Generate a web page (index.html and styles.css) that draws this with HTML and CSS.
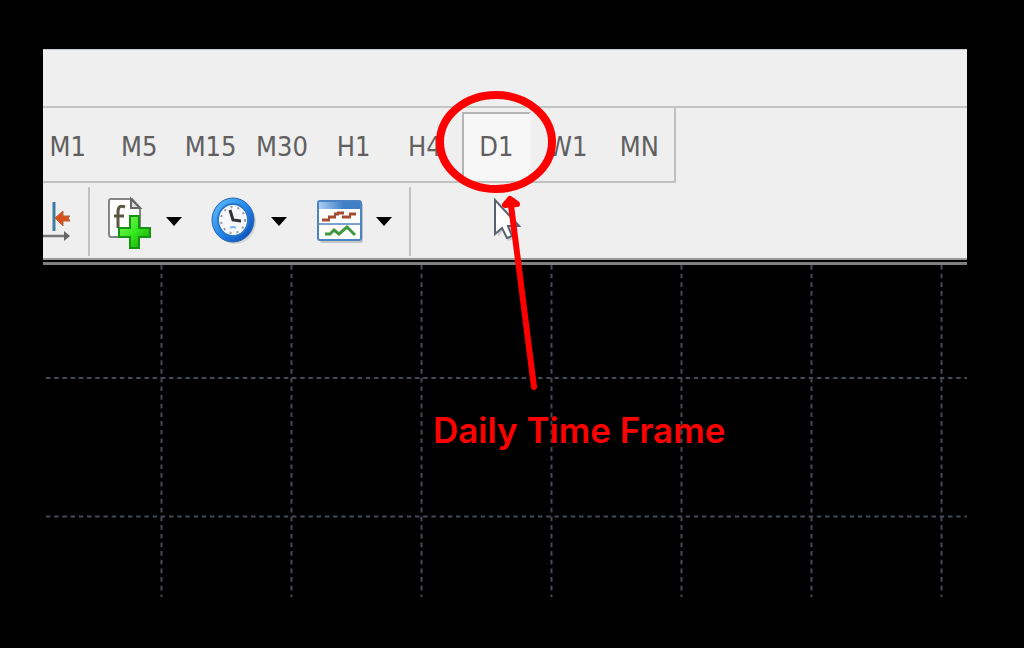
FILE: index.html
```html
<!DOCTYPE html>
<html lang="en">
<head>
<meta charset="utf-8">
<title>Daily Time Frame</title>
<link rel="stylesheet" href="styles.css">
</head>
<body>
<main class="terminal">
  <header class="toolbars">
    <div class="menu-strip"></div>
    <nav class="timeframes" aria-label="Time frames">
      <button class="tf" type="button">M1</button>
      <button class="tf" type="button">M5</button>
      <button class="tf" type="button">M15</button>
      <button class="tf" type="button">M30</button>
      <button class="tf" type="button">H1</button>
      <button class="tf" type="button">H4</button>
      <button class="tf tf-active" type="button" aria-pressed="true">D1</button>
      <button class="tf" type="button">W1</button>
      <button class="tf" type="button">MN</button>
    </nav>
    <div class="tools">
      <button class="tool shift" type="button" aria-label="Chart shift">
        <svg width="32" height="48" viewBox="0 0 32 48">
          <path d="M0 39H24" stroke="#777" stroke-width="2.5"/>
          <path d="M21 34l6 5-6 5z" fill="#666"/>
          <path d="M11 5V34" stroke="#3f7da0" stroke-width="3"/>
          <path d="M12 21l8-7v5h7l-2 2 2 3h-7v5z" fill="#d9501a" stroke="#b5603c" stroke-width="1"/>
        </svg>
      </button>
      <span class="divider"></span>
      <div class="group">
        <button class="tool" type="button" aria-label="Indicators">
          <svg width="48" height="58" viewBox="0 -3 48 58">
            <defs><linearGradient id="plus" x1="0" y1="0" x2="1" y2="1"><stop offset="0" stop-color="#8df56c"/><stop offset=".5" stop-color="#35e81c"/><stop offset="1" stop-color="#159a0b"/></linearGradient></defs>
            <path d="M5 4H26L34 13V42H5Q3 42 3 39V6Q3 4 5 4z" fill="#fff" stroke="#858585" stroke-width="2"/>
            <path d="M25 4V13H34z" fill="#ddd" stroke="#666" stroke-width="2"/>
            <path d="M19 12Q12 9 12 17V33M8 21H18" fill="none" stroke="#5b5747" stroke-width="3"/>
            <path d="M24 21H33V33H44V42H33V53H24V42H13V33H24z" fill="url(#plus)" stroke="#159312" stroke-width="2"/>
          </svg>
          <svg width="16" height="10" viewBox="0 0 16 10"><path d="M0 1H16L8 10z" fill="#000"/></svg>
        </button>
        <button class="tool" type="button" aria-label="Periods">
          <svg width="48" height="52" viewBox="0 0 48 52">
            <defs><linearGradient id="rim" x1="0" y1="0" x2="1" y2="1"><stop offset="0" stop-color="#65c3ff"/><stop offset=".5" stop-color="#2388ec"/><stop offset="1" stop-color="#073fae"/></linearGradient></defs>
            <ellipse cx="24" cy="27" rx="21" ry="22" fill="#bbb" opacity=".5"/>
            <ellipse cx="22" cy="25" rx="21" ry="22" fill="url(#rim)" stroke="#2865aa"/>
            <ellipse cx="22" cy="25" rx="15" ry="16" fill="#f5f7fa" stroke="#2c78c8" stroke-width="2"/>
            <ellipse cx="22" cy="25" rx="12" ry="13" fill="none" stroke="#999" stroke-width="2" stroke-dasharray="2 5"/>
            <path d="M19 15l3 10 8 1" fill="none" stroke="#333" stroke-width="3"/>
            <path d="M19 33q3-2 6 0" fill="none" stroke="#79b6f3" stroke-width="2"/>
          </svg>
          <svg width="16" height="10" viewBox="0 0 16 10"><path d="M0 1H16L8 10z" fill="#000"/></svg>
        </button>
        <button class="tool" type="button" aria-label="Templates">
          <svg width="48" height="52" viewBox="0 0 48 52">
            <defs><linearGradient id="bar"><stop offset="0" stop-color="#a8cdf2"/><stop offset=".6" stop-color="#3e7fc5"/></linearGradient></defs>
            <rect x="4" y="8" width="43" height="40" rx="2" fill="#c4c4c4"/>
            <rect x="2" y="6" width="43" height="39" rx="2" fill="#fff" stroke="#4a84c4" stroke-width="2"/>
            <path d="M3 7H44V14H3z" fill="url(#bar)"/>
            <path d="M3 29H44" stroke="#7aa3d0" stroke-width="2"/>
            <path d="M6 25H14M12 22H20M18 19H23M21 18H28M26 22H35M33 19H40" fill="none" stroke="#a54b31" stroke-width="3"/>
            <path d="M9 39H14L18 35L23 39L31 32L39 40" fill="none" stroke="#3f983e" stroke-width="3"/>
          </svg>
          <svg width="16" height="10" viewBox="0 0 16 10"><path d="M0 1H16L8 10z" fill="#000"/></svg>
        </button>
      </div>
      <span class="divider"></span>
    </div>
  </header>
  <section class="chart">
    <svg class="grid" width="100%" height="332">
      <g stroke="#434b56" stroke-width="2">
        <g stroke-dasharray="4.7 3.97">
          <path d="M118.500 0V332M248.500 0V332M378.500 0V332M508.500 0V332M638.500 0V332M768.500 0V332M898.500 0V332"/>
        </g>
        <g stroke-dasharray="4.5 3.7">
          <line x1="3" y1="113" x2="100%" y2="113"/>
          <line x1="3" y1="251.500" x2="100%" y2="251.500"/>
        </g>
      </g>
    </svg>
  </section>
  <svg class="markup" width="130" height="350" viewBox="430 50 130 350">
    <path d="M498 204L521 226 511 227 516 238 508 241 503 230 498 237z" fill="#aaa" opacity=".5"/>
    <path d="M495 200V234L502 228L507 238L512 236L508 226H519z" fill="#fff" stroke="#596070" stroke-width="2"/>
    <ellipse cx="496" cy="142" rx="56" ry="47" fill="none" stroke="#f00" stroke-width="8"/>
    <path d="M511 205L534 387" stroke="#f00" stroke-width="6" stroke-linecap="round"/>
    <path d="M510 199L505 205L517 204z" fill="#f00" stroke="#f00" stroke-width="6" stroke-linejoin="round"/>
  </svg>
  <p class="caption">Daily Time Frame</p>
</main>
</body>
</html>
```
FILE: styles.css
```css
body {
  margin: 0;
  background: #000;
}

.terminal {
  position: relative;
  margin: 49px 57px 0 43px;
}

.toolbars {
  overflow: hidden;
  background: #efefef;
  border-bottom: 2px solid #999;
}

.menu-strip {
  height: 59px;
  border-top: 1px solid #c5ccd6;
  box-sizing: border-box;
  border-bottom: 2px solid #c4c4c4;
}

.timeframes {
  display: grid;
  grid-template-columns: repeat(9, 1fr);
  gap: 2px;
  box-sizing: border-box;
  width: 643px;
  height: 75px;
  margin-left: -10px;
  padding: 4px 0 0;
  border-right: 2px solid #c0c0c0;
  border-bottom: 2px solid #c0c0c0;
}

.tf {
  padding: 0;
  border: 2px solid transparent;
  background: none;
  color: #606060;
  font: 27px "DejaVu Sans Condensed", "DejaVu Sans", sans-serif;
}

.tf-active {
  border-color: #b5b5b5 #f5f5f5 #f5f5f5 #b5b5b5;
  background: #f7f7f7;
}

.tools {
  display: flex;
  align-items: center;
  height: 75px;
}

.tool {
  display: flex;
  align-items: center;
  gap: 12px;
  padding: 0;
  border: 0;
  background: none;
}

.divider {
  align-self: stretch;
  width: 2px;
  margin: 4px 0 2px;
  background: #c2c2c2;
}

.shift {
  margin-right: 13px;
}

.group {
  display: flex;
  gap: 29px;
  margin: 0 17px 0 16px;
}

.chart {
  margin-top: 2px;
  border-top: 3px solid #808080;
}

.grid {
  display: block;
}

.markup {
  position: absolute;
  top: 1px;
  left: 387px;
}

.caption {
  position: absolute;
  top: 359px;
  left: 390px;
  margin: 0;
  color: #f00;
  font: 600 35px/44px Inter, sans-serif;
  white-space: nowrap;
}
```
